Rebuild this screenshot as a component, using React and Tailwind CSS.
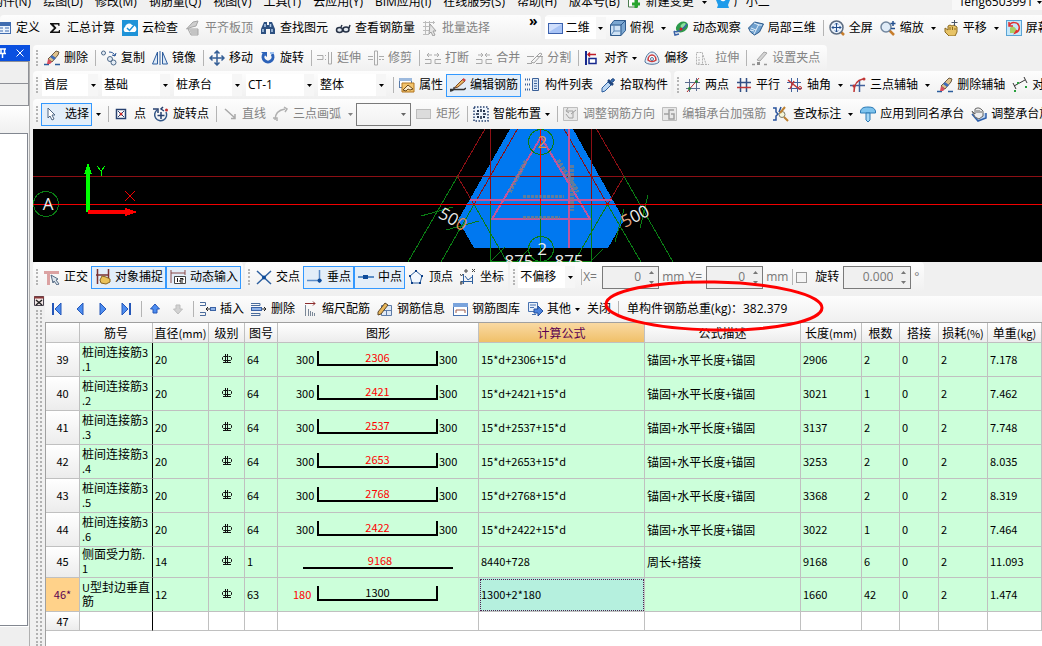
import clsx from "clsx";

const icons = {
  define: (
    <>
      <rect x="1.5" y="2.5" width="13" height="11" fill="#eaf2fc" stroke="#3f6cb0" />
      <path d="M1 3h14v3H1z" fill="#3f6cb0" />
      <path d="M4 8h3M9 8h4M4 11h3M9 11h4" stroke="#3f6cb0" />
    </>
  ),
  sigma: <path d="M3 3h9.500v3h-1l-.5-1.500H6.500L9.500 8l-3.500 3.500h5.500l.5-1.500h1v3H3v-1l4-4-4-4z" fill="#111" />,
  cloud: (
    <>
      <rect width="16" height="16" fill="#1f93d8" />
      <path d="M3 12a3 3 0 0 1 0-5 4 4 0 0 1 7-2 4 4 0 0 1 3 7z" fill="#fff" />
      <path d="m5 8 2.500 2.500L13 4" fill="none" stroke="#1f93d8" strokeWidth="1.500" />
    </>
  ),
  level: (
    <>
      <path d="M1.500 9 8 2l5-1-2 5-4 1z" fill="#cfcfcf" stroke="#a5a5a5" />
      <path d="M3 9h10v6H6z" fill="#e2e2e2" stroke="#a5a5a5" />
      <path d="M5 11h8M6 13h7" stroke="#a5a5a5" />
    </>
  ),
  binocular: (
    <>
      <path d="M4 2h3v3h2V2h3l3 7v5h-5V9H6v5H1V9z" fill="#2d5080" />
      <path d="M3 9v3M12 9v3M5 4v3M10.500 4v3" stroke="#b2cdec" strokeWidth="1.500" />
    </>
  ),
  glasses: (
    <>
      <ellipse cx="4.500" cy="10" rx="3" ry="2.500" fill="#dfe6ee" stroke="#273246" strokeWidth="1.500" />
      <ellipse cx="11" cy="9.500" rx="3" ry="2.500" fill="#dfe6ee" stroke="#273246" strokeWidth="1.500" />
      <path d="M6 7 7 5M14 8l1-3" stroke="#273246" strokeWidth="1.500" />
    </>
  ),
  batch: (
    <>
      <path d="M1 2.500h12M1 6.500h6M1 10.500h6M1 14.500h6M3.500 1v14M7.500 1v5M11.500 1v3" stroke="#bcbcbc" fill="none" />
      <path d="m8 4 6 7h-3l2 4-2 1-2-4-2 2z" fill="#e4e4e4" stroke="#9f9f9f" />
    </>
  ),
  plane: (
    <>
      <rect x=".5" y="3.500" width="14" height="10" fill="#a9c4f6" stroke="#3c62ae" />
      <path d="M1 4h13L1 12z" fill="#d0dffc" />
    </>
  ),
  cube: (
    <>
      <path d="M.5 5 4 .5h11.500v10L11 15.500H.5z" fill="#7ba7d1" stroke="#2f5b8d" />
      <path d="M1 5.500h9.500V15H1z" fill="#cfe2f4" />
      <path d="M.5 5H11v10.500M11 5l4.500-4.500" stroke="#2f5b8d" fill="none" />
      <path d="M4 5.500V11l-3 4M4 11h7" stroke="#5a86b6" fill="none" />
    </>
  ),
  orbit: (
    <>
      <ellipse cx="9" cy="7" rx="6.500" ry="5" fill="#2e9b4b" transform="rotate(-35 9 7)" />
      <ellipse cx="10" cy="5.500" rx="3" ry="2" fill="#8be09b" transform="rotate(-35 10 5)" />
      <path d="M1 11c3 2 9-1 13-7M1 11l1 4 4-1" stroke="#3a63a8" strokeWidth="1.500" fill="none" />
      <circle cx="8" cy="9" r="1.500" fill="#c22" />
    </>
  ),
  local3d: (
    <>
      <path d="m.5 8 6-6 9 2-4 8-5 3-4-3z" fill="#6fa0ce" stroke="#2d5b8c" />
      <path d="m3 8 5 2 3-6M6 3l5 2h3M6 14l2-4M2 10l4 1" stroke="#e3f0fb" fill="none" />
    </>
  ),
  full: (
    <>
      <path d="m11 11 4 4" stroke="#c77e2d" strokeWidth="2.500" />
      <circle cx="7.500" cy="7.500" r="6.500" fill="#eaf2fb" stroke="#5d6d82" strokeWidth="1.500" />
      <path d="M7.500 3v9M3 7.500h9M6 4.500l1.500-1.500L9 4.500M6 10.500 7.500 12 9 10.500M4.500 6 3 7.500 4.500 9M10.500 6 12 7.500 10.500 9" stroke="#24508f" fill="none" />
    </>
  ),
  zoom: (
    <>
      <path d="m9 10 5 5" stroke="#c77e2d" strokeWidth="2.500" />
      <circle cx="6" cy="7" r="5" fill="#dfebf7" stroke="#71869e" strokeWidth="1.500" />
      <path d="M13 1v5M10.500 3.500h5M11 8.500h4" stroke="#24508f" strokeWidth="1.500" />
    </>
  ),
  hand: (
    <>
      <path d="m2 8 3 2V6l2-1 2 1 2-1 3 2v5l-2 4H6l-4-4z" fill="#e7c366" stroke="#8c6b22" />
      <path d="M7 7v3M9.500 7v3M12 8v2" stroke="#8c6b22" />
      <path d="M11.500 0v6M8.500 2.500h6" stroke="#4a5565" />
    </>
  ),
  screen: (
    <>
      <rect x=".5" y=".5" width="15" height="15" fill="#c5e8fa" stroke="#5aa4d5" />
      <path d="M4 8c2-3 5-1 6 1v4H4z" fill="#a9cf63" />
      <path d="M3 6c2-5 9-4 10 0s-1 6-4 7l2-3M3 2v4h4" stroke="#e03030" strokeWidth="1.500" fill="none" />
    </>
  ),
  eraser: (
    <>
      <path d="M0 14.500h5M11 14.500h5" stroke="#2b5d9c" strokeWidth="1.500" />
      <path d="m4 9 8-8 3 1-1 3-6 7z" fill="#dfc28c" stroke="#6b5b45" />
      <path d="m4 9 4 3-2 2H3z" fill="#d94c5c" />
      <path d="m6 7 4 3 2-2-4-3z" fill="#3f6cb8" />
    </>
  ),
  copy: (
    <>
      <circle cx="2.500" cy="3" r="2" fill="#e4ecf5" stroke="#4d6888" />
      <circle cx="9" cy="9" r="2.500" fill="#e4ecf5" stroke="#4d6888" />
      <circle cx="12.500" cy="12.500" r="2.500" fill="#e4ecf5" stroke="#4d6888" />
      <path d="M8 2c3 0 5 1 6 4M11 5l3 1 1-3" stroke="#2a5596" fill="none" />
    </>
  ),
  mirror: (
    <>
      <path d="M5.500 2v12H.5zM10.500 2v12h5z" fill="#dce9f7" stroke="#2f5e9e" />
      <path d="M8 1v14" stroke="#2f5e9e" />
    </>
  ),
  move: <path d="M8 1v14M1 8h14M5.500 3.500 8 1l2.500 2.500M5.500 12.500 8 15l2.500-2.500M3.500 5.500 1 8l2.500 2.500M12.500 5.500 15 8l-2.500 2.500" stroke="#355f96" strokeWidth="1.500" fill="none" />,
  rotate: (
    <>
      <path d="M4 4a5 5 0 1 0 8 0" stroke="#2c62b8" strokeWidth="3" fill="none" />
      <path d="M1 2h6v5z" fill="#2c62b8" />
      <path d="M10 3h4" stroke="#9dc0ee" strokeWidth="2" />
    </>
  ),
  extend: <path d="M0 5.500h6v4H0M8 5.500h1M8 9.500h1M11.500 2v12h3V2" stroke="#ababab" fill="none" />,
  trim: <path d="M0 6.500h5M0 9.500h5M6.500 1v14h3V1zM11 6.500h5M11 9.500h2M14 9.500h2" stroke="#ababab" fill="none" />,
  brk: <path d="M0 9.500h6v4H0M16 9.500h-6v4h6M2 5h5M4 3 2 5l2 2M14 5H9M12 3l2 2-2 2" stroke="#ababab" fill="none" />,
  merge: <path d="M0 9.500h6v4H0M16 9.500h-6v4h6M2 5h5M5 3l2 2-2 2M14 5H9M11 3 9 5l2 2" stroke="#ababab" fill="none" />,
  split: <path d="M0 6.500h7M10 6.500h6M0 13.500h5M9 13.500h6v-7M4 12 13 3l2 1-8 9z" stroke="#a3a3a3" fill="none" />,
  align: (
    <>
      <path d="M2 1v14" stroke="#16288e" strokeWidth="2" />
      <path d="M5 8.500h7v5H5z" fill="#fff" stroke="#16288e" strokeWidth="1.500" />
      <path d="M4 4.500h8M6 2.500l-2 2 2 2" stroke="#c01c28" fill="none" strokeWidth="1.500" />
    </>
  ),
  offset: (
    <>
      <path d="M1 12c0-4 3-10 7-10s7 6 7 10c-2 3-12 3-14 0z" fill="#e5eef8" stroke="#51759c" />
      <path d="M4 10c0-3 2-5 4-5s4 2 4 5c-2 2-6 2-8 0z" fill="#fff" stroke="#cc3a3a" strokeWidth="1.500" />
      <circle cx="8" cy="9" r="1.500" fill="none" stroke="#51759c" />
    </>
  ),
  stretch: <path d="M1.500 2.500h6v12h-6zM4 14V7M8 5l3 9M7 14.500h7" stroke="#b0b0b0" fill="none" strokeDasharray="2 1" />,
  grips: (
    <>
      <path d="M0 14.500h3M12 14.500h3" stroke="#999" strokeWidth="1.500" />
      <path d="m5 10 7-8 3 1-7 8z" fill="#d4d4d4" stroke="#a6a6a6" />
      <path d="M5 12h3v3H5z" fill="#8f8f8f" />
    </>
  ),
  attr: (
    <>
      <rect x=".5" y="1.500" width="12" height="9" fill="#fff" stroke="#587aa8" />
      <path d="M0 1h13v3H0z" fill="#9cb9dd" />
      <path d="M3 6h12v9H3z" fill="#f3c46c" stroke="#b1741e" />
      <path d="m4 13 5-5 5 4-3 1-2-1-2 2z" fill="#fbe9c9" stroke="#6c4a1b" />
    </>
  ),
  edit: (
    <>
      <path d="M0 14c5 0 4-4 4-4M0 12.500h14l2-1.500" stroke="#333" strokeWidth="1.500" fill="none" />
      <path d="m6 9 7-7 2 2-7 6-3 1z" fill="#e9b763" stroke="#7b4a2a" />
      <path d="m12 3 1.500-2L16 3l-1.500 1.500z" fill="#c44" />
    </>
  ),
  list: (
    <>
      <path d="M0 2.500h5M0 7.500h5M0 12.500h5" stroke="#3b6199" strokeWidth="2" strokeDasharray="1 1" />
      <path d="M7.500 1.500h6v12h-6z" fill="#dbe8f7" stroke="#3b6199" />
      <path d="M9 4h3M9 6.500h3M9 9h3M9 11.500h3" stroke="#3b6199" />
    </>
  ),
  picker: (
    <>
      <path d="m2 11 6-6 3 3-6 6-3 1z" fill="#bcd7f3" stroke="#2d5f9f" />
      <path d="m8 3 5 5" stroke="#22467c" strokeWidth="2.500" />
      <path d="m10 5 2-3c2-1 3 1 2 2l-3 2z" fill="#3c74bb" stroke="#22467c" />
    </>
  ),
  twoPoint: (
    <>
      <path d="M4.500 2v13M11.500 1v13M0 5.500h15M1 11.500h14" stroke="#5b6c90" />
      <path d="M2 15 14 1" stroke="#b12a2a" />
      <circle cx="4.500" cy="11.500" r="1.500" fill="#25863a" />
      <circle cx="11.500" cy="4.500" r="1.500" fill="#25863a" />
    </>
  ),
  parallel: (
    <>
      <path d="M4.500 1v14M10.500 1v14M1 5.500h14" stroke="#324f85" strokeWidth="1.500" />
      <path d="M1 10.500h14" stroke="#c03636" strokeWidth="1.500" />
    </>
  ),
  axisAngle: (
    <>
      <path d="M4.500 1v14M10.500 1v14M0 5.500h14M1 11.500h14" stroke="#41619c" />
      <path d="m1 3 11 9M3 12l4-8" stroke="#c03636" strokeWidth="1.500" />
      <circle cx="13" cy="11" r="1.500" fill="none" stroke="#c03636" />
    </>
  ),
  threeAxis: (
    <>
      <path d="M0 8.500h15M9.500 3v12" stroke="#41619c" strokeWidth="1.500" />
      <path d="M4 15C4 7 7 3 13 2" stroke="#c03636" fill="none" strokeWidth="1.500" />
      <circle cx="14" cy="2" r="1.500" fill="#c03636" />
      <circle cx="4" cy="9" r="1.500" fill="#c03636" />
    </>
  ),
  alignMark: (
    <>
      <path d="m2 9 11-6M1 6l3 6M12 0l3 6" stroke="#333" />
      <path d="M2 13h2v2H2zM13 9h2v2h-2zM5 5h2v2H5z" fill="#28a03d" />
    </>
  ),
  cursor: <path d="m3 2 7 7H7l2 4-2 1-2-4-2 2z" fill="#fff" stroke="#4f6683" />,
  point: (
    <>
      <rect x="2.500" y="3.500" width="9" height="9" fill="#fff" stroke="#27406f" strokeWidth="1.500" />
      <path d="m4 5 6 6M10 5l-6 6" stroke="#27406f" />
      <circle cx="7" cy="8" r="1.500" fill="#c22b2b" />
    </>
  ),
  rotPoint: (
    <>
      <path d="M4 4a6 6 0 1 0 9 2" fill="none" stroke="#335788" strokeWidth="1.500" />
      <path d="M8 6v7M4.500 9.500h7M0 3h5v4M10 1 8 3l3 2" stroke="#27406f" strokeWidth="1.500" fill="none" />
      <circle cx="13.500" cy="4" r="1.500" fill="#c22b2b" />
    </>
  ),
  line: <path d="m3 3 10 9M13 8v4.500H9" stroke="#a9a9a9" strokeWidth="1.500" fill="none" />,
  arc: <path d="M2 14C2 8 5 4 12 3M0 12h4v3M11 1l3 2-2 3" stroke="#b0b0b0" strokeWidth="1.500" fill="none" />,
  rect: <rect x=".5" y="3.500" width="14" height="9" fill="#dcdcdc" stroke="#bdbdbd" />,
  smart: (
    <>
      <rect x="1" y="1" width="14" height="14" fill="#eef4fb" stroke="#27406f" strokeWidth="1.500" strokeDasharray="1.500 1.500" />
      <path d="M8 3v3M8 10v3M3 8h3M10 8h3M5 4v2M4 5h2M11 4v2M10 5h2M5 10v2M4 11h2M11 10v2M10 11h2" stroke="#14233f" strokeWidth="1.500" />
    </>
  ),
  adjustDir: (
    <>
      <path d="M.5 1.500h14v13H.5z" fill="#e8e8e8" stroke="#bdbdbd" />
      <path d="M4 5h6v7H6l-3-4M5 2 3 5l3 2M8 8l5-4" stroke="#a0a0a0" fill="none" />
    </>
  ),
  strengthen: (
    <>
      <path d="M.5 1.500h14v13H.5z" fill="#e8e8e8" stroke="#bdbdbd" />
      <path d="M2 8h5V4h5M7 8v5h5V8H9" stroke="#a0a0a0" fill="none" strokeWidth="1.500" />
    </>
  ),
  checkMark: (
    <>
      <path d="M0 2h3v4l2 2-2 2v4H0M8 1 6 6" stroke="#27529c" fill="none" strokeWidth="1.500" />
      <circle cx="9" cy="8.500" r="3" fill="#f4f6d8" stroke="#7b7b6c" />
      <path d="m11 11 4 4M12 1 7 7" stroke="#bd8132" strokeWidth="2" />
    </>
  ),
  apply: (
    <>
      <path d="M.5 5c1-3 3-4 7.500-4s6.500 1 7.500 4v2H.5z" fill="#7dc3ee" stroke="#2c7ab5" />
      <path d="M6 7h4v7l-2 2-2-2z" fill="#a6d7f5" stroke="#2c7ab5" />
    </>
  ),
  adjustCap: (
    <>
      <path d="m1 8 6 7 8-3V7" fill="#b8d0ee" stroke="#2c5eaa" strokeWidth="1.500" />
      <path d="m1 5 3 3V3l2-1h2l2 1 2 2v5l-4 3-4-2z" fill="#ededed" stroke="#666" />
      <path d="M6 4v3M8 4v3M10 5v2" stroke="#666" />
    </>
  ),
  ortho: (
    <>
      <path d="M0 2h15v3H6v11H3V5H0z" fill="#dba2a2" />
      <path d="m7 6 7 4-2 1 3 4-2 1-3-4-1 2z" fill="#dce4ec" stroke="#556b84" />
    </>
  ),
  snap: (
    <>
      <path d="M2.500 0v15M13.500 0v9M1 6h13" stroke="#7b3333" strokeWidth="1.500" />
      <path d="m5 11 2-4 4 1 4 2v3l-4 2-5-1z" fill="#eac259" stroke="#87641f" />
    </>
  ),
  dyn: (
    <>
      <path d="M1 1v13M15 1v5M1 4h14" stroke="#8a4a4a" />
      <path d="M4.500 7.500h11v7h-11z" fill="#fff" stroke="#444" />
      <path d="M7.500 9v4M10 9.500h3v1.500h-3v2h3" stroke="#111" fill="none" />
    </>
  ),
  cross: (
    <>
      <path d="m1 2 14 13M15 2 1 15" stroke="#2d5f9f" strokeWidth="1.500" />
      <circle cx="8" cy="8.500" r="2" fill="#0d4c9c" />
    </>
  ),
  perp: (
    <>
      <path d="M0 11.500h15M12.500 1v13" stroke="#5b8cc8" strokeWidth="1.500" />
      <circle cx="12.500" cy="11.500" r="2" fill="#0d4c9c" />
    </>
  ),
  mid: (
    <>
      <path d="M0 8h16" stroke="#2d6db5" strokeWidth="1.500" />
      <rect x="5" y="6" width="5" height="4" fill="#0d4c9c" />
    </>
  ),
  vertex: (
    <>
      <path d="m7 2 6 5-2 7H3L1 7z" fill="#f3f8fe" stroke="#2d5f9f" />
      <path d="M6 1h2v2H6zM12 6h2v2h-2zM10 13h2v2h-2zM2 13h2v2H2zM0 6h2v2H0z" fill="#0d3f86" />
    </>
  ),
  coord: (
    <>
      <path d="M3.500 5v10M1 12.500h11M5 7l3 4 4-3M12.500 6v9" stroke="#2d5f9f" fill="none" />
      <path d="m12 0 3 3M15 0l-3 3M0 5l1.500 2L3 5M0 13h2v2H0zM5 1h2v2H5z" stroke="#444" fill="none" />
    </>
  ),
  first: (
    <>
      <path d="M4 2v12" stroke="#2557b8" strokeWidth="2" />
      <path d="M12 2v12L6 8z" fill="#4d8df0" stroke="#2557b8" />
    </>
  ),
  prev: <path d="M11 2v12L5 8z" fill="#4d8df0" stroke="#2557b8" />,
  next: <path d="M5 2v12l6-6z" fill="#4d8df0" stroke="#2557b8" />,
  last: (
    <>
      <path d="M12 2v12" stroke="#2557b8" strokeWidth="2" />
      <path d="M4 2v12l6-6z" fill="#4d8df0" stroke="#2557b8" />
    </>
  ),
  up: <path d="m8 3 4.500 5H10v4H6V8H3.500z" fill="#4d8df0" stroke="#2557b8" />,
  down: <path d="m8 13 4.500-5H10V4H6v4H3.500z" fill="#d2d2d2" stroke="#bdbdbd" />,
  insert: (
    <>
      <path d="M0 1.500h5.500v3H0M0 11.500h5.500v3H0" stroke="#4a6c9c" fill="none" />
      <path d="M6 8h4M8 6 6 8l2 2" stroke="#222" fill="none" />
      <rect x="10.500" y="6.500" width="5" height="3" fill="#8fb3e8" stroke="#3b63a5" />
    </>
  ),
  remove: (
    <>
      <path d="M0 2.500h9v2H0M0 12.500h9v2H0" stroke="#4a6c9c" fill="none" />
      <rect x=".5" y="6.500" width="10" height="3" fill="#8fb3e8" stroke="#3b63a5" />
      <path d="M11 8h4M13 6l2 2-2 2" stroke="#222" fill="none" />
    </>
  ),
  scale: (
    <>
      <path d="M3.500 4v11M6.500 8v7M8.500 10v5M10.500 11v4M12.500 12v3" stroke="#7a8797" />
      <path d="M3 2.500h10M11 .5l2 2-2 2" stroke="#8c2c2c" fill="none" />
    </>
  ),
  info: (
    <>
      <path d="M4.500 4.500h10v10h-10zM4 9.500h11M9.500 9v5" fill="#dfe9f6" stroke="#5d7ba8" />
      <path d="m1 11 7-9 3 2-7 9-3 1z" fill="#e8b65a" stroke="#5d4728" />
    </>
  ),
  library: (
    <>
      <rect x="1.500" y="2.500" width="14" height="12" fill="#fff" stroke="#4872b0" />
      <path d="M1 2h15v4H1z" fill="#79a3dc" />
      <path d="M4 12V9h9v3" stroke="#9b5a4b" fill="none" />
    </>
  ),
  other: (
    <>
      <path d="M1.500 1.500h9v9h-9z" fill="#e7effa" stroke="#4872b0" />
      <path d="M3 4h6M3 6.500h4M5 13.500h4" stroke="#4872b0" />
      <path d="M7 8h4V5l5 5-5 5v-3H7z" fill="#4d84dd" stroke="#234f9d" />
    </>
  ),
  newDoc: (
    <>
      <path d="M2.500-2h9v15h-9z" fill="#fff" stroke="#4c7c4f" />
      <path d="M10 6v8M6 10h8" stroke="#28a52e" strokeWidth="3" />
    </>
  ),
  mascot: (
    <>
      <path d="M1 1h14v5l-2 5 1 3H2l1-3-2-5z" fill="#1f9bea" />
      <path d="M5 5c1 3 5 3 6 0z" fill="#fff" />
    </>
  ),
};

const Icon = ({ name }) => (
  <svg viewBox="0 0 16 16" className="size-4 shrink-0" aria-hidden="true">
    {icons[name]}
  </svg>
);

const Caret = ({ className }) => (
  <svg viewBox="0 0 5 3" className={clsx("h-[3px] w-[5px] shrink-0", className)} aria-hidden="true">
    <path d="M0 0h5L2.500 3z" fill="currentColor" />
  </svg>
);

// arrow: "near" sits right after the label, "far" is a split drop-down
const Tool = ({ icon, label, dim, active, arrow }) => (
  <button
    type="button"
    disabled={dim}
    className={clsx(
      "flex h-[23px] shrink-0 items-center pl-1 pr-[3px]",
      dim ? "text-[#838383]" : "text-black",
      active && "bg-[#e3eef9] ring-1 ring-inset ring-[#3399ff]"
    )}
  >
    {icon && (
      <span className="mr-1">
        <Icon name={icon} />
      </span>
    )}
    {label}
    {arrow === "near" && <Caret className="ml-1" />}
    {arrow === "far" && <Caret className="ml-[7px]" />}
  </button>
);

const Sep = () => <span className="ml-1 mr-px h-4 w-px shrink-0 bg-[#b4b4b4]" />;

const Grip = () => (
  <span className="flex w-[7px] shrink-0 justify-center">
    <span className="h-4 border-l-2 border-dotted border-[#b5b5b5]" />
  </span>
);

const Bar = ({ children, className }) => (
  <div className={clsx("flex h-full shrink-0 items-center rounded-sm bg-linear-to-b from-[#fdfdfd] to-[#f0f0f0]", className)}>
    {children}
  </div>
);

const Combo = ({ label, value, icon, className }) => (
  <span className={clsx("relative flex h-[22px] shrink-0 items-center bg-white", className)}>
    {icon && (
      <span className="ml-[3px]">
        <Icon name={icon} />
      </span>
    )}
    <select aria-label={label} className="h-full w-full min-w-0 appearance-none bg-transparent pl-[2px] outline-none">
      <option>{value}</option>
    </select>
    <span className="pointer-events-none absolute inset-y-0 right-0 flex w-[10px] items-center justify-center bg-[#f6f6f6]">
      <Caret />
    </span>
  </span>
);

const Spin = ({ id, value, className }) => (
  <span className={clsx("relative flex h-[23px] shrink-0 border border-[#7a7a7a] bg-[#f0f0f0] text-[#777]", className)}>
    <input id={id} defaultValue={value} className="w-full min-w-0 bg-transparent pr-[17px] text-right outline-none" />
    <span className="pointer-events-none absolute inset-y-0 right-[4px] flex flex-col justify-between py-[4px]">
      <Caret className="rotate-180" />
      <Caret />
    </span>
  </span>
);

const menus = ["构件(N)", "绘图(D)", "修改(M)", "钢筋量(Q)", "视图(V)", "工具(T)", "云应用(Y)", "BIM应用(I)", "在线服务(S)", "帮助(H)", "版本号(B)"];

const MenuBar = () => (
  <nav className="flex h-[15px] items-end pb-[5px]">
    <div className="-ml-[9px] flex shrink-0 gap-3">
      {menus.map((m) => (
        <button key={m} type="button" className="leading-4">
          {m}
        </button>
      ))}
    </div>
    <button type="button" className="ml-[6px] flex shrink-0 items-center gap-1 leading-4">
      <Icon name="newDoc" />
      新建变更
      <Caret className="ml-1" />
    </button>
    <button type="button" className="ml-2 flex shrink-0 items-center gap-[3px] leading-4">
      <Icon name="mascot" />
      广小二
    </button>
    <button type="button" className="ml-auto flex shrink-0 items-center gap-1 bg-[#f8f8f8] pl-2 leading-4">
      feng6503991
      <Caret />
    </button>
  </nav>
);

const MainToolbar = () => (
  <div className="mb-1 flex h-[26px] gap-1">
    <Bar>
      <span className="-ml-2 flex">
        <Tool icon="define" label="定义" />
      </span>
      <Tool icon="sigma" label="汇总计算" />
      <Tool icon="cloud" label="云检查" />
      <Tool icon="level" label="平齐板顶" dim />
      <Tool icon="binocular" label="查找图元" />
      <Tool icon="glasses" label="查看钢筋量" />
      <Tool icon="batch" label="批量选择" dim />
      <button type="button" aria-label="更多" className="ml-9 self-start pr-[3px] text-sm leading-3 font-bold">
        »
      </button>
    </Bar>
    <Bar>
      <Combo label="视图" value="二维" icon="plane" className="w-[61px]" />
      <Tool icon="cube" label="俯视" arrow="far" />
      <Tool icon="orbit" label="动态观察" />
      <Tool icon="local3d" label="局部三维" />
      <Sep />
      <Tool icon="full" label="全屏" />
      <Tool icon="zoom" label="缩放" arrow="far" />
      <Tool icon="hand" label="平移" arrow="far" />
      <Tool icon="screen" label="屏幕旋转" />
    </Bar>
  </div>
);

const EditToolbar = () => (
  <div className="flex h-[26px]">
    <Bar className="pr-1">
      <Grip />
      <Tool icon="eraser" label="删除" />
      <Sep />
      <Tool icon="copy" label="复制" />
      <Tool icon="mirror" label="镜像" />
      <Sep />
      <Tool icon="move" label="移动" />
      <Tool icon="rotate" label="旋转" />
      <Sep />
      <Tool icon="extend" label="延伸" dim />
      <Tool icon="trim" label="修剪" dim />
      <Sep />
      <Tool icon="brk" label="打断" dim />
      <Tool icon="merge" label="合并" dim />
      <Tool icon="split" label="分割" dim />
      <Sep />
      <Tool icon="align" label="对齐" arrow="near" />
      <Tool icon="offset" label="偏移" />
      <Tool icon="stretch" label="拉伸" dim />
      <Sep />
      <Tool icon="grips" label="设置夹点" dim />
    </Bar>
  </div>
);

const ComponentToolbar = () => (
  <div className="flex h-7 gap-[3px]">
    <Bar>
      <Grip />
      <div className="ml-[2px] mr-[3px] flex gap-1">
        <Combo label="楼层" value="首层" className="w-14" />
        <Combo label="类别" value="基础" className="w-[68px]" />
        <Combo label="类型" value="桩承台" className="w-[68px]" />
        <Combo label="构件" value="CT-1" className="w-[68px]" />
        <Combo label="范围" value="整体" className="w-[68px]" />
      </div>
      <Sep />
      <Tool icon="attr" label="属性" />
      <Tool icon="edit" label="编辑钢筋" active />
      <Tool icon="list" label="构件列表" />
      <Tool icon="picker" label="拾取构件" />
    </Bar>
    <Bar>
      <Grip />
      <Tool icon="twoPoint" label="两点" />
      <Tool icon="parallel" label="平行" />
      <Tool icon="axisAngle" label="轴角" arrow="far" />
      <Tool icon="threeAxis" label="三点辅轴" arrow="far" />
      <Tool icon="eraser" label="删除辅轴" />
      <Tool icon="alignMark" label="对齐标注" />
    </Bar>
  </div>
);

const DrawToolbar = () => (
  <div className="flex h-[30px]">
    <Bar>
      <Grip />
      <span className="ml-px flex">
        <Tool icon="cursor" label="选择" active />
      </span>
      <button type="button" aria-label="选择方式" className="flex w-3 justify-center">
        <Caret />
      </button>
      <Sep />
      <Tool icon="point" label="点" />
      <Tool icon="rotPoint" label="旋转点" />
      <Sep />
      <Tool icon="line" label="直线" dim />
      <Tool icon="arc" label="三点画弧" dim arrow="far" />
      <span className="relative mr-px flex h-[23px] w-[55px] items-center border border-[#7a7a7a]">
        <select aria-label="半径" className="w-full appearance-none bg-transparent outline-none" />
        <Caret className="pointer-events-none absolute right-1 text-[#666]" />
      </span>
      <Tool icon="rect" label="矩形" dim />
      <Sep />
      <Tool icon="smart" label="智能布置" arrow="near" />
      <Sep />
      <Tool icon="adjustDir" label="调整钢筋方向" dim />
      <Tool icon="strengthen" label="编辑承台加强筋" dim />
      <Tool icon="checkMark" label="查改标注" arrow="far" />
      <Tool icon="apply" label="应用到同名承台" />
      <Tool icon="adjustCap" label="调整承台放坡" />
    </Bar>
  </div>
);

const Drawing = () => (
  <svg className="block h-[133px] w-full bg-black font-['Open_Sans']" shapeRendering="crispEdges" aria-label="桩承台平面">
    <polygon points="477,0 425,91 441,119 575,119 591,91 540,0" fill="#0078f0" />
    <g stroke="#8c0f14" fill="none">
      <path d="M0 47.500H3000M452 0 424.500 47.500 441 75.500M484.500 0 441 75.500M531 0l43.500 75.500M563.500 0 591 47.500l-16.500 28" />
      <path d="M457.500 0v76M558.500 0v76" />
    </g>
    <g stroke="#c0569e" strokeWidth="2" fill="none">
      <path d="M437 71h142M536 0v119M508 8l-49 82h98z" />
    </g>
    <g stroke="#0a7d14" fill="none">
      <path d="M424.500 47.500 375 133M441 75.500 408 133M441 75.500 474 133M574.500 75.500 541 133M574.500 75.500 608 133M591 47.500 640 133" />
      <path d="M457.500 76v56.500h101V76M507.500 75v58" />
      <path d="m388 87 32-9M413 101l33-9M615 66l-8 33M591 80l-9 33M458 132l14-14M484 132l14-14M558 132l12-12" />
      <circle cx="508" cy="13" r="12.500" />
      <circle cx="508" cy="120" r="12.500" />
      <circle cx="13" cy="75" r="12.500" />
    </g>
    <g stroke="#f00000" fill="none">
      <path d="M0 75.500H3000" />
      <path d="M507.500 0v76" strokeWidth="1.500" />
      <path d="m92 62 10 10M102 62 92 72" />
    </g>
    <g stroke="#807f80" strokeWidth="4" strokeDasharray="3 1" opacity=".75">
      <path d="M490 67h41M490 88h37" strokeWidth="3" />
      <path d="m493 32-17 32M525 31l20 32M539 36v46" />
    </g>
    <path d="M55 83V38" stroke="#0f0" strokeWidth="4" />
    <path d="M51 45h8l-4-11z" fill="#0f0" />
    <path d="m64 37 4 5 4-5M68 42v5" stroke="#0f0" fill="none" />
    <path d="M55 83h40" stroke="#f00" strokeWidth="4" />
    <path d="M92 79v8l12-4z" fill="#f00" />
    <g fill="#ececec" fontSize="17" textAnchor="middle">
      <text x="15" y="81">A</text>
      <text x="420" y="96" transform="rotate(30 420 90)">
        50<tspan fill="#e08f52">0</tspan>
      </text>
      <text x="602" y="93" transform="rotate(-27 602 87)">
        <tspan fill="#e0a27a">5</tspan>00
      </text>
      <text x="509" y="19" fill="#e08f40">2</text>
      <text x="509" y="126">2</text>
      <text x="486" y="138">875</text>
      <text x="536" y="138">875</text>
    </g>
  </svg>
);

const SnapToolbar = () => (
  <div className="mb-1 flex h-[30px] gap-[2px]">
    <Bar className="pr-[2px]">
      <Grip />
      <Tool icon="ortho" label="正交" />
      <Tool icon="snap" label="对象捕捉" active />
      <Tool icon="dyn" label="动态输入" active />
    </Bar>
    <Bar className="pr-px">
      <Grip />
      <Tool icon="cross" label="交点" />
      <Tool icon="perp" label="垂点" active />
      <Tool icon="mid" label="中点" active />
      <Tool icon="vertex" label="顶点" />
      <Tool icon="coord" label="坐标" />
    </Bar>
    <Bar className="pr-1 text-[#777]">
      <Grip />
      <span className="ml-px mr-[2px] flex text-black">
        <Combo label="偏移方式" value="不偏移" className="w-[57px]" />
      </span>
      <Sep />
      <label htmlFor="dx" className="w-[19px]">X=</label>
      <Spin id="dx" value="0" className="w-[57px]" />
      <label htmlFor="dy" className="flex w-[47px] justify-between pl-[3px] pr-1">
        <span>mm</span>
        <span>Y=</span>
      </label>
      <Spin id="dy" value="0" className="w-[57px]" />
      <span className="pl-[3px]">mm</span>
      <Sep />
      <input id="rotate" type="checkbox" className="ml-[2px] size-[11px] appearance-none border border-[#9a9a9a] bg-[#f4f4f4]" />
      <label htmlFor="rotate" className="ml-2 mr-1 text-black">旋转</label>
      <Spin id="angle" value="0.000" className="w-[68px]" />
      <label htmlFor="angle" className="ml-[3px]">°</label>
    </Bar>
  </div>
);

const NavButton = ({ icon, label }) => (
  <button type="button" aria-label={label} className="flex w-[23px] shrink-0 justify-center">
    <Icon name={icon} />
  </button>
);

const RebarToolbar = () => (
  <div className="flex h-[26px] items-center bg-linear-to-b from-[#fdfdfd] to-[#f0f0f0]">
    <NavButton icon="first" label="第一条" />
    <NavButton icon="prev" label="上一条" />
    <NavButton icon="next" label="下一条" />
    <NavButton icon="last" label="最后一条" />
    <Sep />
    <NavButton icon="up" label="上移" />
    <NavButton icon="down" label="下移" />
    <Sep />
    <span className="ml-px flex">
      <Tool icon="insert" label="插入" />
    </span>
    <Tool icon="remove" label="删除" />
    <Tool icon="scale" label="缩尺配筋" />
    <Tool icon="info" label="钢筋信息" />
    <Tool icon="library" label="钢筋图库" />
    <Tool icon="other" label="其他" arrow="near" />
    <Tool label="关闭" />
    <Sep />
    <span className="relative ml-[7px] shrink-0">
      单构件钢筋总重(kg)：382.379
      <svg viewBox="0 0 222 54" className="pointer-events-none absolute -left-6 -top-[22px] z-10 h-[54px] w-[222px] max-w-none" aria-hidden="true">
        <ellipse cx="111" cy="27" rx="108" ry="24" fill="none" stroke="#f00" strokeWidth="3" transform="rotate(1 111 27)" />
      </svg>
    </span>
  </div>
);

// Latin runs are set one size smaller than the Chinese text
const Mixed = ({ text }) =>
  text.split(/([\x20-\x7e]+)/).map((part, i) =>
    i % 2 ? (
      <span key={i} className="text-[11px]">
        {part}
      </span>
    ) : (
      part
    )
  );

const Grade = () => (
  <svg viewBox="0 0 10 10" className="mx-auto size-[10px]" role="img" aria-label="三级钢">
    <path d="M3.500 2.500h-2l-1 1v2l1 1h7l1-1v-2l-1-1h-2M3.500 0v9M5.500 0v9M3.500 2.500h2M1 8.500h8" stroke="#111" fill="none" />
  </svg>
);

const Shape = ({ left, mid, right, kind, given }) => {
  if (kind === "line") {
    return (
      <div className="mx-auto w-[150px] border-b-2 border-black pl-1 text-center leading-[13px] text-[#f00]">{mid}</div>
    );
  }
  return (
    <div className="flex items-center pl-[15px]">
      <span className={clsx("w-[22px] shrink-0", given ? "text-[#f00]" : "pl-[3px]")}>{left}</span>
      <span
        className={clsx(
          "ml-[2px] mr-px h-[15px] w-[121px] shrink-0 border-2 border-t-0 border-black text-center leading-[13px]",
          !given && "text-[#f00]"
        )}
      >
        {mid}
      </span>
      <span>{right}</span>
    </div>
  );
};

const spaced = (no, sub, mid, len, count, weight) => ({
  no,
  name: `桩间连接筋3\n.${sub}`,
  dia: "20",
  fig: "64",
  shape: { left: "300", mid, right: "300" },
  formula: `15*d+${mid}+15*d`,
  desc: "锚固+水平长度+锚固",
  len,
  count,
  weight,
});

const rows = [
  spaced("39", 1, "2306", "2906", "2", "7.178"),
  spaced("40", 2, "2421", "3021", "1", "7.462"),
  spaced("41", 3, "2537", "3137", "2", "7.748"),
  spaced("42", 4, "2653", "3253", "2", "8.035"),
  spaced("43", 5, "2768", "3368", "2", "8.319"),
  spaced("44", 6, "2422", "3022", "1", "7.464"),
  {
    no: "45", name: "侧面受力筋.\n1", dia: "14", fig: "1", shape: { kind: "line", mid: "9168" },
    formula: "8440+728", desc: "周长+搭接", len: "9168", count: "6", weight: "11.093", short: true,
  },
  {
    no: "46*", name: "U型封边垂直\n筋", dia: "12", fig: "63", shape: { left: "180", mid: "1300", given: true },
    formula: "1300+2*180", desc: "", len: "1660", count: "42", weight: "1.474", current: true,
  },
];

const headers = ["", "筋号", "直径(mm)", "级别", "图号", "图形", "计算公式", "公式描述", "长度(mm)", "根数", "搭接", "损耗(%)", "单重(kg)"];

const line = "border-b border-r border-[#c0c0c0]";
const cell = "border-b border-r border-[#c0c0c0] p-0 pb-[2px] pl-[2px]";

const RebarTable = () => (
  <table className="w-full table-fixed border-separate border-spacing-0 border-t border-[#a0a0a0] font-['Noto_Sans_CJK_SC',sans-serif] leading-[12px]">
    <colgroup>
      <col className="w-[34px]" />
      <col className="w-[73px]" />
      <col className="w-[56px]" />
      <col className="w-[36px]" />
      <col className="w-[33px]" />
      <col className="w-[201px]" />
      <col className="w-[166px]" />
      <col className="w-[156px]" />
      <col className="w-[61px]" />
      <col className="w-[38px]" />
      <col className="w-[39px]" />
      <col className="w-[49px]" />
      <col />
    </colgroup>
    <thead>
      <tr className="h-5">
        {headers.map((h) => (
          <th
            key={h}
            scope="col"
            className={clsx(
              line,
              "p-0 font-normal",
              h === "计算公式" ? "bg-linear-to-b from-[#f9d9a2] to-[#f0c068] text-[#5a0050]" : "bg-linear-to-b from-white to-[#ececec]"
            )}
          >
            <Mixed text={h} />
          </th>
        ))}
      </tr>
    </thead>
    <tbody>
      {rows.map((r) => (
        <tr key={r.no} className={clsx("bg-[#ccffda] text-[11px]", r.short ? "h-[29px]" : "h-[34px]")}>
          <th
            scope="row"
            className={clsx(line, "p-0 pb-[2px] font-normal", r.current ? "bg-[#ffd28a] text-[#5a0050]" : "bg-linear-to-b from-white to-[#ececec]")}
          >
            {r.no}
          </th>
          <td className={clsx(cell, "border-r-black text-xs leading-[13px] whitespace-pre")}>
            <Mixed text={r.name} />
          </td>
          <td className={cell}>{r.dia}</td>
          <td className={clsx(line, "p-0 pb-[2px]")}>
            <Grade />
          </td>
          <td className={cell}>{r.fig}</td>
          <td className={clsx(line, "p-0 pb-[2px]")}>
            <Shape {...r.shape} />
          </td>
          <td className={clsx(cell, r.current && "bg-[#b5f0de] outline-1 -outline-offset-2 outline-dotted outline-[#502050]")}>
            {r.formula}
          </td>
          <td className={clsx(line, "p-0 pl-[2px] text-xs leading-[12px]")}>
            <Mixed text={r.desc} />
          </td>
          <td className={cell}>{r.len}</td>
          <td className={cell}>{r.count}</td>
          <td className={cell}>0</td>
          <td className={cell}>2</td>
          <td className={cell}>{r.weight}</td>
        </tr>
      ))}
      <tr className="h-[19px] bg-white text-[11px]">
        <th scope="row" className={clsx(line, "bg-linear-to-b from-white to-[#ececec] p-0 font-normal")}>47</th>
        {headers.slice(1).map((h) => (
          <td key={h} className={clsx(cell, h === "筋号" && "border-r-black")} />
        ))}
      </tr>
    </tbody>
  </table>
);

const SidePanel = () => (
  <aside className="flex w-[33px] shrink-0 flex-col">
    <div className="flex h-4 w-[30px] items-center justify-between bg-[#0a50e0] pr-[6px] text-white">
      <svg viewBox="0 0 8 10" className="h-[10px] w-2" aria-hidden="true">
        <path d="M0 1h6M1 1v4M4.500 1v4M0 5.500h6M2.500 6v4" stroke="#fff" strokeWidth="1.500" />
      </svg>
      <button type="button" aria-label="关闭面板">
        <svg viewBox="0 0 8 8" className="size-2" aria-hidden="true">
          <path d="m.5.500 7 7M7.500.500l-7 7" stroke="#fff" />
        </svg>
      </button>
    </div>
    <div className="flex w-[30px] flex-1 flex-col border-r border-[#b0b0b0]">
      <div className="h-[23px] w-[29px] border-y border-r border-[#8e9096] bg-[#efefef]" />
      <div className="h-[22px] w-[29px] border-r border-b border-[#8e9096] bg-[#efefef]" />
      <div className="h-[27px] bg-linear-to-b from-white to-[#f0f0f0]" />
      <div className="w-[28px] flex-1 border-y border-r border-[#828790] bg-white" />
      <div className="h-5 border-t border-white bg-[#efefef]" />
    </div>
  </aside>
);

const App = () => (
  <div className="flex min-h-screen flex-col overflow-hidden bg-[#f0f0f0] font-['Open_Sans','Noto_Sans_CJK_SC',sans-serif] text-xs whitespace-nowrap text-black">
    <MenuBar />
    <MainToolbar />
    <div className="flex flex-1">
      <SidePanel />
      <main className="flex min-w-0 flex-1 flex-col">
        <EditToolbar />
        <ComponentToolbar />
        <DrawToolbar />
        <Drawing />
        <SnapToolbar />
        <section className="flex flex-1">
          <div className="flex w-3 shrink-0 flex-col items-center">
            <button type="button" aria-label="关闭" className="mb-1">
              <svg viewBox="0 0 10 10" className="size-[10px]" aria-hidden="true">
                <path d="M.5.500h9v9h-9z" fill="#f4e8e8" stroke="#4a4450" />
                <path d="M0 1.500h10" stroke="#8c3a3a" strokeWidth="2" />
                <path d="m2 4 6 5M8 4 2 9" stroke="#222" strokeWidth="1.500" />
              </svg>
            </button>
            <div className="flex flex-1 gap-[2px]">
              <span className="border-l-2 border-dotted border-[#b2b2b2]" />
              <span className="border-l-2 border-dotted border-[#b2b2b2]" />
            </div>
          </div>
          <div className="flex min-w-0 flex-1 flex-col">
            <RebarToolbar />
            <div className="flex-1 border-l border-[#a0a0a0] bg-white">
              <RebarTable />
            </div>
          </div>
        </section>
      </main>
    </div>
  </div>
);

export default App;
